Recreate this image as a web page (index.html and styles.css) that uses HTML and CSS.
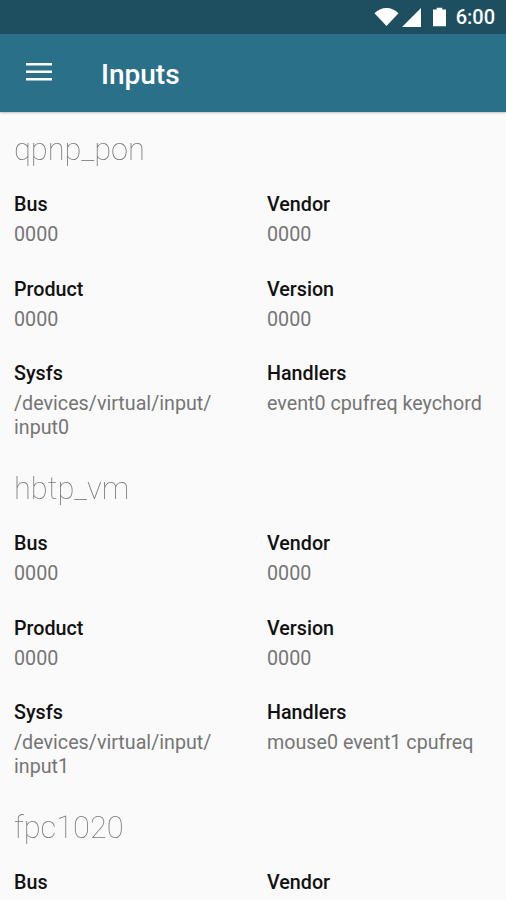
FILE: index.html
```html
<!DOCTYPE html>
<html lang="en">
<head>
<meta charset="utf-8">
<title>Inputs</title>
<link rel="stylesheet" href="styles.css">
</head>
<body>
<div class="screen">
  <header class="status">
    <svg class="ic-wifi" viewBox="0 0 24 18" width="25" height="18"><path d="M0 5.2C3.3 2 7.400 0 12 0s8.700 2 12 5.200L12 18z"/></svg>
    <svg class="ic-signal" viewBox="0 0 20 20" width="19" height="19"><path d="M20 0V20H0z"/></svg>
    <svg class="ic-battery" viewBox="0 0 14 20" width="13" height="20"><path d="M4 2V0H10V2H14V20H0V2z"/></svg>
    <span class="clock">6:00</span>
  </header>
  <header class="toolbar">
    <svg class="ic-menu" viewBox="0 0 26 18" width="26" height="18"><path d="M0 0H26V2.500H0zM0 7.500H26V10H0zM0 15H26V17.500H0z"/></svg>
    <h1 class="title">Inputs</h1>
  </header>
  <main class="content">
    <section class="device">
      <h2 class="name">qpnp_pon</h2>
      <div class="grid">
        <div class="cell"><div class="label">Bus</div><div class="value">0000</div></div>
        <div class="cell"><div class="label">Vendor</div><div class="value">0000</div></div>
        <div class="cell"><div class="label">Product</div><div class="value">0000</div></div>
        <div class="cell"><div class="label">Version</div><div class="value">0000</div></div>
        <div class="cell"><div class="label">Sysfs</div><div class="value">/devices/virtual/input/<br>input0</div></div>
        <div class="cell"><div class="label">Handlers</div><div class="value">event0 cpufreq keychord</div></div>
      </div>
    </section>
    <section class="device">
      <h2 class="name">hbtp_vm</h2>
      <div class="grid">
        <div class="cell"><div class="label">Bus</div><div class="value">0000</div></div>
        <div class="cell"><div class="label">Vendor</div><div class="value">0000</div></div>
        <div class="cell"><div class="label">Product</div><div class="value">0000</div></div>
        <div class="cell"><div class="label">Version</div><div class="value">0000</div></div>
        <div class="cell"><div class="label">Sysfs</div><div class="value">/devices/virtual/input/<br>input1</div></div>
        <div class="cell"><div class="label">Handlers</div><div class="value">mouse0 event1 cpufreq</div></div>
      </div>
    </section>
    <section class="device">
      <h2 class="name">fpc1020</h2>
      <div class="grid">
        <div class="cell"><div class="label">Bus</div></div>
        <div class="cell"><div class="label">Vendor</div></div>
      </div>
    </section>
  </main>
</div>
</body>
</html>
```
FILE: styles.css
```css
* { box-sizing: border-box; }
html, body { margin: 0; padding: 0; }
body { font-family: Roboto, sans-serif; background: #fafafa; }
.screen { width: 506px; height: 900px; overflow: hidden; display: flex; flex-direction: column; }
.status { height: 34px; background: #1e4f60; display: flex; align-items: center; justify-content: flex-end; padding-right: 11px; flex: none; }
.status svg { fill: #fff; display: block; }
.ic-wifi { margin-right: 3px; }
.ic-signal { margin-right: 12px; }
.ic-battery { margin-right: 10px; }
.clock { color: #fff; font-size: 20px; font-weight: 500; }
.toolbar { height: 78px; background: #2a7089; display: flex; align-items: center; padding-left: 26px; flex: none; box-shadow: 0 1px 2px rgba(0,0,0,.25); position: relative; }
.ic-menu { fill: #fff; display: block; margin-bottom: 3px; }
.title { margin: 4px 0 0 49px; color: #fff; font-size: 28px; font-weight: 500; line-height: 78px; height: 78px; }
.content { padding: 18px 0 0 14px; }
.device { margin-bottom: 29px; }
.name { margin: 0; font-size: 30.800px; font-weight: 100; line-height: 40px; color: #777; will-change: transform; }
.grid { display: grid; grid-template-columns: 253px 225px; margin-top: 20px; row-gap: 27.500px; }
.label { font-size: 19.700px; font-weight: 500; line-height: 30px; color: #111; }
.value { font-size: 19.700px; font-weight: 400; line-height: 24px; color: #757575; margin-top: 3px; }
```
